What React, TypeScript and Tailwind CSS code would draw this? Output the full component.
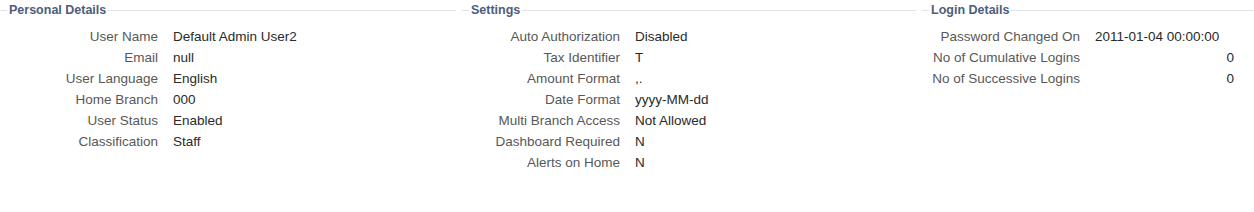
import React from "react";

type Row = { label: string; value: string; right?: boolean };

const personal: Row[] = [
  { label: "User Name", value: "Default Admin User2" },
  { label: "Email", value: "null" },
  { label: "User Language", value: "English" },
  { label: "Home Branch", value: "000" },
  { label: "User Status", value: "Enabled" },
  { label: "Classification", value: "Staff" },
];

const settings: Row[] = [
  { label: "Auto Authorization", value: "Disabled" },
  { label: "Tax Identifier", value: "T" },
  { label: "Amount Format", value: ",." },
  { label: "Date Format", value: "yyyy-MM-dd" },
  { label: "Multi Branch Access", value: "Not Allowed" },
  { label: "Dashboard Required", value: "N" },
  { label: "Alerts on Home", value: "N" },
];

const login: Row[] = [
  { label: "Password Changed On", value: "2011-01-04 00:00:00" },
  { label: "No of Cumulative Logins", value: "0", right: true },
  { label: "No of Successive Logins", value: "0", right: true },
];

function Section({ title, rows, padRight }: { title: string; rows: Row[]; padRight?: boolean }) {
  return (
    <div className="flex flex-col">
      <div className="flex items-center h-[20px]">
        <div className="w-[7px] h-px bg-[#dfe3ea]" />
        <span className="px-[2px] text-[12.5px] font-bold text-[#4e5d7b] leading-[20px]">{title}</span>
        <div className="flex-1 h-px bg-[#dfe3ea]" />
      </div>
      <div className={`grid grid-cols-[158px_1fr] gap-x-[15px] pt-[6px] ${padRight ? "pr-[20px]" : ""}`}>
        {rows.map((r) => (
          <React.Fragment key={r.label}>
            <div className="text-right text-[13.5px] leading-[21px] h-[21px] text-[#585858] whitespace-nowrap">{r.label}</div>
            <div className={`text-[13.5px] leading-[21px] h-[21px] text-[#2a2a2a] whitespace-nowrap ${r.right ? "text-right" : ""}`}>{r.value}</div>
          </React.Fragment>
        ))}
      </div>
    </div>
  );
}

export default function App() {
  return (
    <div className="w-[1254px] h-[212px] bg-white font-['Liberation_Sans',Arial,sans-serif]">
      <div className="grid grid-cols-[456px_454px_1fr] gap-x-[6px]">
        <Section title="Personal Details" rows={personal} />
        <Section title="Settings" rows={settings} />
        <Section title="Login Details" rows={login} padRight />
      </div>
    </div>
  );
}
